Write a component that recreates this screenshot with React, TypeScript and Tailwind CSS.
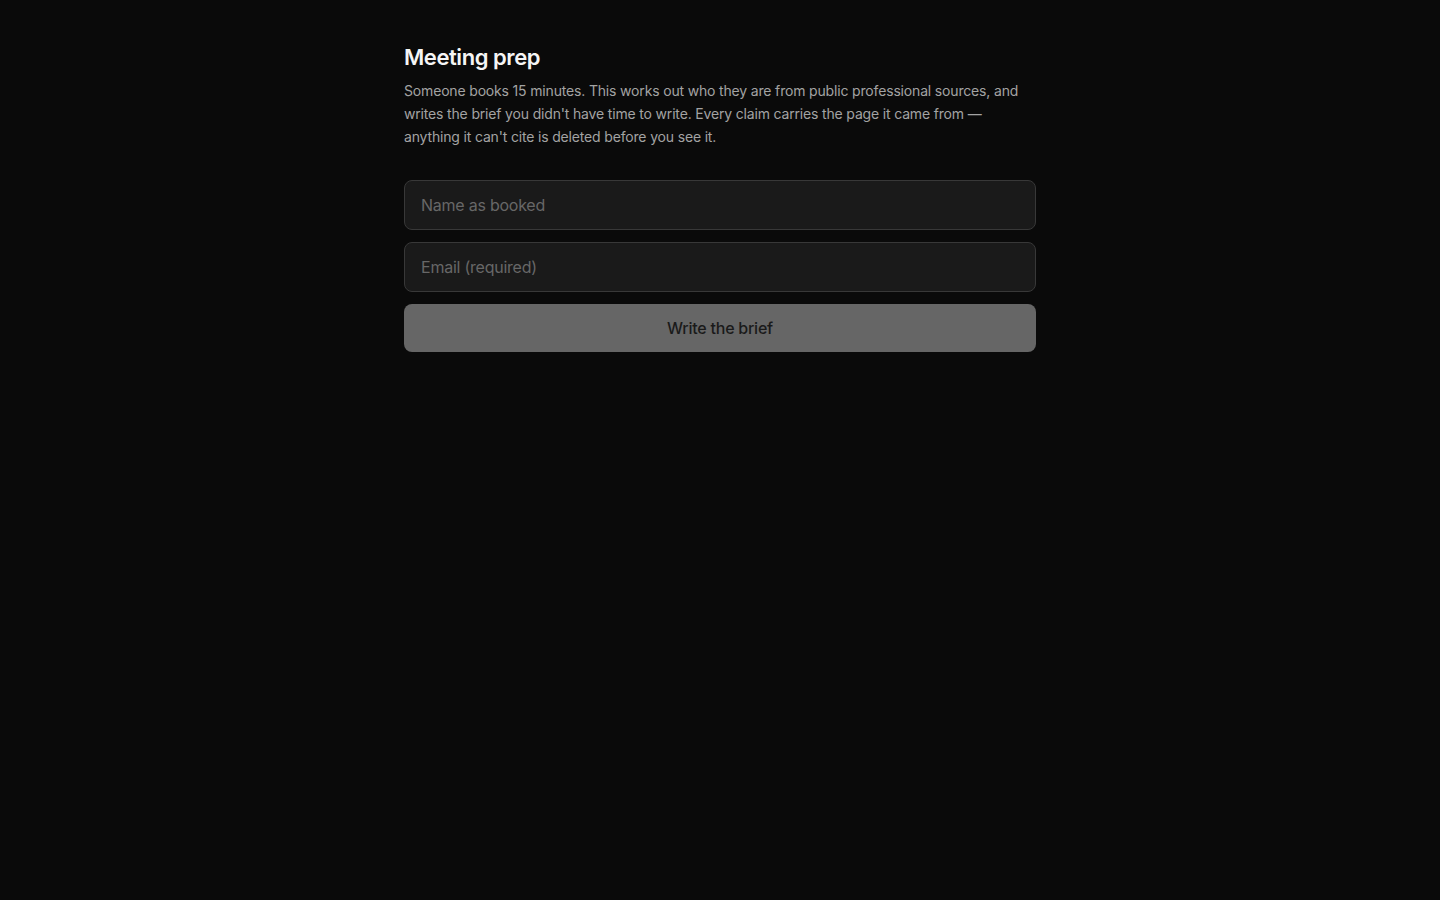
import React from "react";

export default function App() {
  return (
    <div
      className="min-h-screen w-full bg-[#0a0a0a] text-white"
      style={{ fontFamily: "Inter, 'Noto Sans', sans-serif" }}
    >
      <div className="mx-auto w-[632px] pt-[43px]">
        <h1 className="text-[22px] leading-[28px] font-semibold tracking-[-0.02em] text-[#f5f5f5]">
          Meeting prep
        </h1>
        <p className="mt-[8px] text-[14px] leading-[23px] tracking-[-0.012em] text-[#a3a3a3]">
          Someone books 15 minutes. This works out who they are from public professional sources, and
          writes the brief you didn't have time to write. Every claim carries the page it came from —
          anything it can't cite is deleted before you see it.
        </p>
        <form className="mt-[32px] flex flex-col gap-3" onSubmit={(e) => e.preventDefault()}>
          <input
            type="text"
            placeholder="Name as booked"
            className="h-[50px] w-full rounded-lg border border-[#383838] bg-[#1a1a1a] px-4 text-[16px] tracking-[-0.015em] text-[#e5e5e5] placeholder:text-[#676767] outline-none"
          />
          <input
            type="email"
            placeholder="Email (required)"
            className="h-[50px] w-full rounded-lg border border-[#383838] bg-[#1a1a1a] px-4 text-[16px] tracking-[-0.015em] text-[#e5e5e5] placeholder:text-[#676767] outline-none"
          />
          <button
            type="submit"
            className="h-[48px] w-full rounded-lg bg-[#666666] text-[16px] font-medium tracking-[-0.015em] text-[#1a1a1a]"
          >
            Write the brief
          </button>
        </form>
      </div>
    </div>
  );
}
